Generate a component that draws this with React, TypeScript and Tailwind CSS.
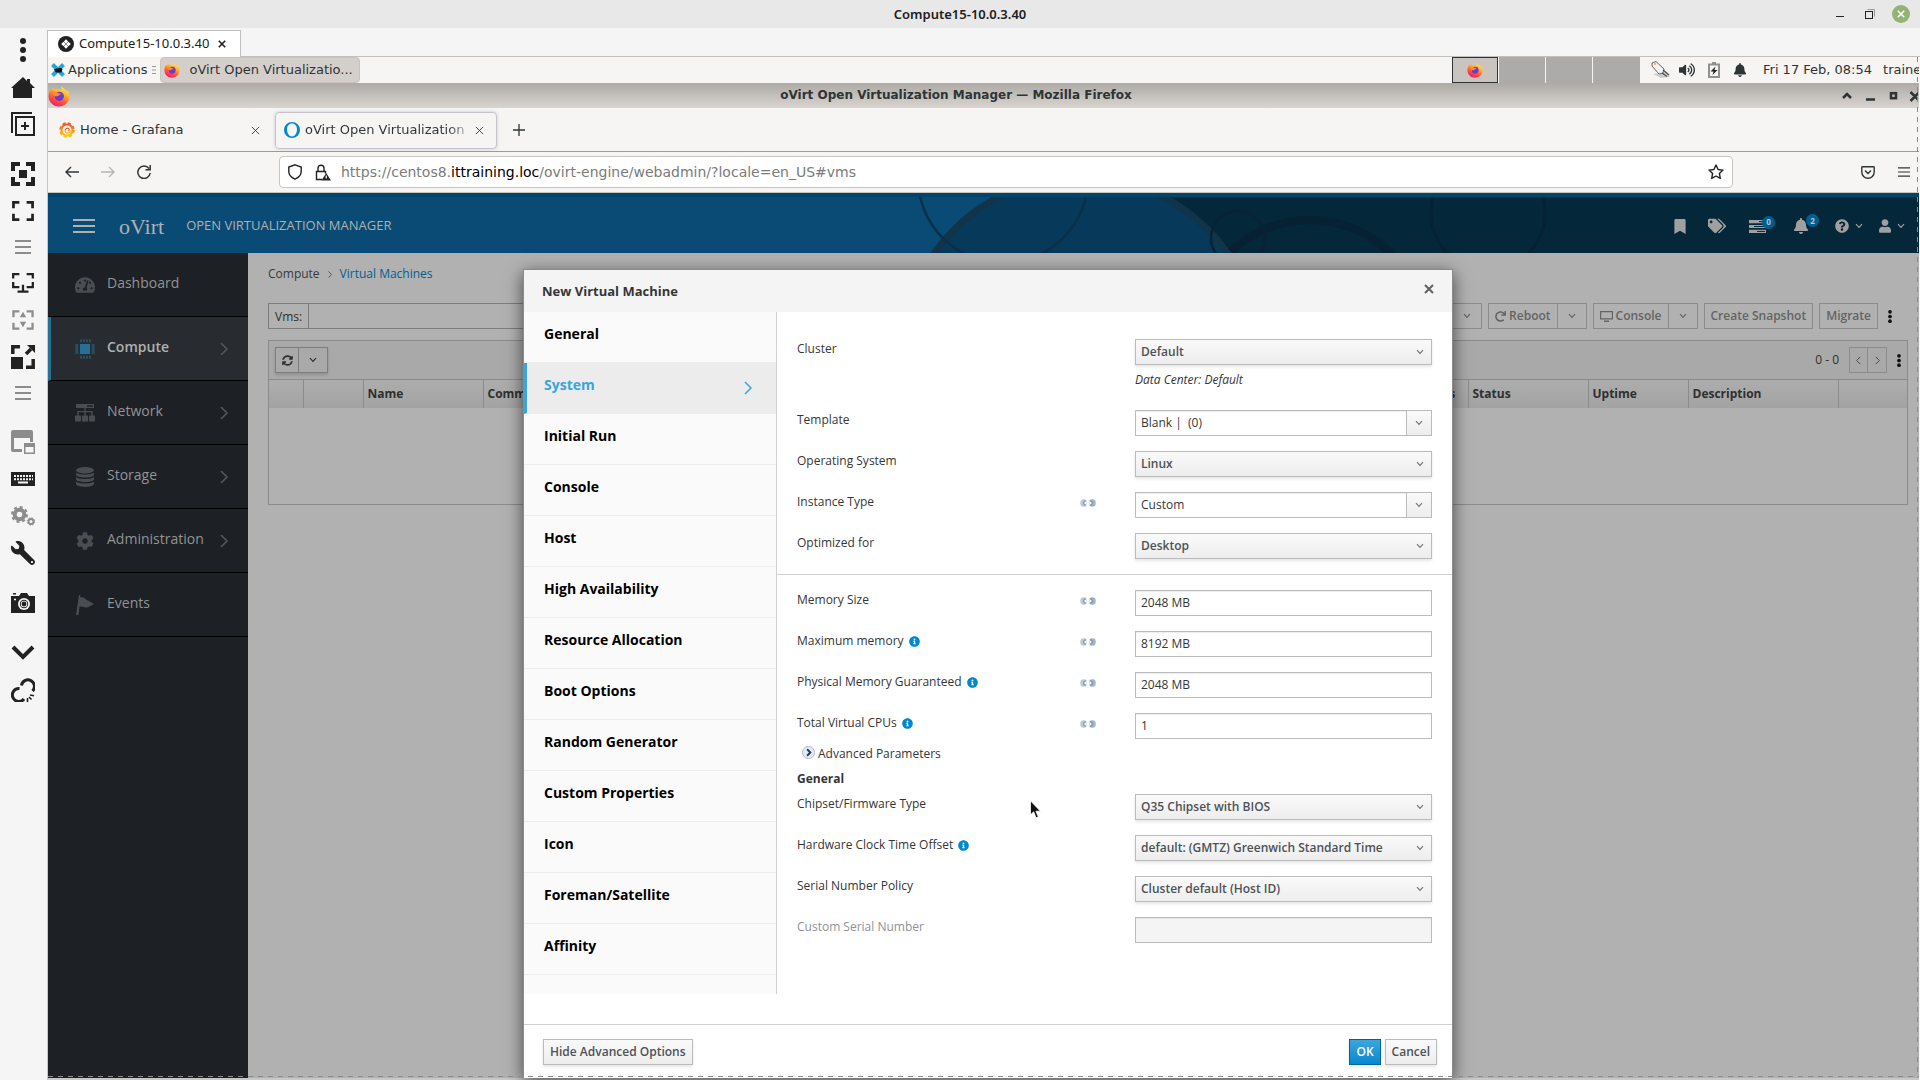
import React from 'react';
import {
  FaBell,
  FaBookmark,
  FaCog,
  FaDatabase,
  FaFlag,
  FaInfoCircle,
  FaQuestionCircle,
  FaRedo,
  FaSyncAlt,
  FaTachometerAlt,
  FaTags,
  FaUser,
  FaVolumeUp,
  FaWrench,
} from 'react-icons/fa';

type IconProps = { className?: string };

const Chevron = ({ className = '' }: IconProps) => (
  <svg viewBox="0 0 8 6" className={className} fill="none" stroke="currentColor" strokeWidth="1.2">
    <path d="M1 1.2 4 4.4 7 1.2" />
  </svg>
);

const ChevronRight = ({ className = '' }: IconProps) => (
  <svg viewBox="0 0 8 14" className={className} fill="none" stroke="currentColor" strokeWidth="1.5">
    <path d="M1 1 7 7 1 13" />
  </svg>
);

const Kebab = ({ className = '' }: IconProps) => (
  <svg viewBox="0 0 4 14" className={className} fill="currentColor">
    <circle cx="2" cy="2" r="2" />
    <circle cx="2" cy="7" r="2" />
    <circle cx="2" cy="12" r="2" />
  </svg>
);

const Cross = ({ className = '' }: IconProps) => (
  <svg viewBox="0 0 10 10" className={className} fill="none" stroke="currentColor">
    <path d="M1 1 9 9M9 1 1 9" />
  </svg>
);

const FirefoxLogo = ({ className = '' }: IconProps) => (
  <svg viewBox="0 0 22 22" className={className}>
    <defs>
      <linearGradient id="ffBody" x1="0.8" y1="0" x2="0.3" y2="1">
        <stop offset="0" stopColor="#fff14a" />
        <stop offset="0.35" stopColor="#ffb52e" />
        <stop offset="0.65" stopColor="#ff5b36" />
        <stop offset="1" stopColor="#f0137a" />
      </linearGradient>
    </defs>
    <path
      fill="url(#ffBody)"
      d="M13.5 1c-.6 1.8.3 2.9-.2 3.7C11.7 4 9.5 4 8 4.6 7 4.2 6.2 3.5 5.9 2.5 5 3.2 4.5 4.2 4.3 5.1 3.8 4.8 3.5 4.3 3.3 3.6 1.5 5.700.6 8.500.6 11.2c0 5.900 4.600 10.300 10.400 10.300S21.400 17 21.400 11.300c0-2.600-.8-4.900-2.300-6.500.1.900.1 1.500-.1 2.100C18 4.500 15 3.700 13.500 1Z"
    />
    <circle cx="11.3" cy="11.3" r="4.600" fill="#7139c9" />
    <path fill="#5b4be0" d="M11 7a4.500 4.500 0 0 1 4.500 5.500C14 10 12.500 9.500 10.500 9.500Z" />
    <path fill="#ff8a26" d="M4.500 8c2-1.500 4.500-1.200 6 .2 1 .1 2 .3 2.300.8-.4 1.100-2.200 1-2.700 1.900-1.500.9-4.600.8-5.600-2.900Z" />
  </svg>
);

const GrafanaLogo = () => (
  <svg viewBox="0 0 16 16" className="size-4" fill="none">
    <defs>
      <linearGradient id="grafana" x1="0" y1="0" x2="0" y2="1">
        <stop offset="0" stopColor="#f05a28" />
        <stop offset="1" stopColor="#fbca0a" />
      </linearGradient>
    </defs>
    <circle cx="8" cy="8" r="6.400" stroke="url(#grafana)" strokeWidth="2.800" strokeDasharray="3 2.026" />
    <circle cx="8" cy="8" r="5.600" stroke="url(#grafana)" strokeWidth="2" />
    <path d="M11.500 8.500c-.2 3-4.300 3.600-5.300 1-.8-2.500 1.800-4.200 3.600-2.600.9 1 .2 2.300-.9 2" stroke="url(#grafana)" strokeWidth="1.200" />
  </svg>
);

const LinkIcon = () => (
  <svg viewBox="0 0 16 8" className="w-4 h-2" fill="none">
    <rect x="0.300" y="0.300" width="6.700" height="7.400" rx="3" fill="#bccad8" />
    <rect x="9" y="0.300" width="6.700" height="7.400" rx="3" fill="#a3b5c8" />
    <path d="M7 3H5.500v2H7M9 3h1.500v2H9" stroke="#fff" strokeWidth="1.200" />
    <path d="M6 2.100H4.800a1.200 1.200 0 0 0-1.200 1.200v1.400a1.200 1.200 0 0 0 1.200 1.200H6M10 2.100h1.200a1.200 1.200 0 0 1 1.200 1.200v1.400a1.200 1.200 0 0 1-1.200 1.200H10" stroke="#73889f" strokeWidth="0.900" />
  </svg>
);

const GearPair = () => (
  <svg viewBox="0 0 24 20" className="w-6 h-5" fill="none" stroke="currentColor">
    <circle cx="8.500" cy="8.500" r="4.800" strokeWidth="4" />
    <circle cx="8.500" cy="8.500" r="7.500" strokeWidth="2" strokeDasharray="3 2.890" />
    <circle cx="20" cy="15.500" r="2.500" strokeWidth="1.800" />
    <circle cx="20" cy="15.500" r="3.700" strokeWidth="1" strokeDasharray="1.500 1.406" />
  </svg>
);

const corners = 'M1.500 8V1.500H8M16 1.500h6.500V8M22.500 14v6.500H16M8 20.500H1.500V14';

// icons of the viewer's own tool rail, all on a 24px grid
const railGroups: { label: string; dim?: boolean; short?: boolean; icon: React.ReactNode }[][] = [
  [
    {
      label: 'Menu',
      icon: (
        <svg viewBox="0 0 24 24" className="size-6" fill="currentColor">
          <circle cx="12" cy="3" r="3" />
          <circle cx="12" cy="12" r="3" />
          <circle cx="12" cy="21" r="3" />
        </svg>
      ),
    },
    {
      label: 'Home',
      icon: (
        <svg viewBox="0 0 24 24" className="size-6" fill="currentColor">
          <path d="M12 2 0 13h2v10h19V13h3l-5-5V4h-3v2Z" />
        </svg>
      ),
    },
    {
      label: 'New connection',
      icon: (
        <svg viewBox="0 0 24 24" className="size-6" fill="none" stroke="currentColor" strokeWidth="2">
          <rect x="5" y="5" width="18" height="18" />
          <path d="M1 21V1h20M14 10v8M10 14h8" />
        </svg>
      ),
    },
  ],
  [
    {
      label: 'Fit window',
      icon: (
        <svg viewBox="0 0 24 24" className="size-6" fill="none" stroke="currentColor" strokeWidth="4">
          <path d="M2 9V2h7M15 2h7v7M22 15v7h-7M9 22H2v-7" />
          <rect x="8" y="8" width="8" height="8" fill="currentColor" stroke="none" />
        </svg>
      ),
    },
    {
      label: 'Full screen',
      icon: (
        <svg viewBox="0 0 24 22" className="w-6 h-5" fill="none" stroke="currentColor" strokeWidth="3">
          <path d={corners} />
        </svg>
      ),
    },
    { label: 'More view options', dim: true, short: true, icon: <RailLines /> },
    {
      label: 'Multi monitor',
      icon: (
        <svg viewBox="0 0 24 22" className="w-6 h-5" fill="none" stroke="currentColor" strokeWidth="2.500">
          <path d="M1.200 6V1.200H8M16 1.200h6.800V6M22.800 10v5.500H16M8 15.500H1.200V10M12 13v7M6 20.500h12" />
        </svg>
      ),
    },
    {
      label: 'Dynamic resolution',
      dim: true,
      icon: (
        <svg viewBox="0 0 24 22" className="w-6 h-5" fill="none" stroke="currentColor" strokeWidth="2.500">
          <path d={corners} />
          <path d="m12 2 3.500 6h-7ZM12 19l3.500-6h-7Z" fill="currentColor" stroke="none" />
        </svg>
      ),
    },
    {
      label: 'Scale',
      icon: (
        <svg viewBox="0 0 24 24" className="size-6" fill="none" stroke="currentColor" strokeWidth="3.500">
          <path d="M1.800 9V1.800H9M22.200 14v8.200H15M15 9l5-5" />
          <path d="M16 0h8v8ZM0 12h12v12H0Z" fill="currentColor" stroke="none" />
        </svg>
      ),
    },
    { label: 'More scaling options', dim: true, short: true, icon: <RailLines /> },
  ],
  [
    {
      label: 'Picture in picture',
      dim: true,
      icon: (
        <svg viewBox="0 0 24 24" className="size-6" fill="currentColor">
          <path d="M2 0h18a2 2 0 0 1 2 2v10h-3V8H3v11h8v3H2a2 2 0 0 1-2-2V2a2 2 0 0 1 2-2Z" />
          <path d="M13 13h11v11H13Zm1.500 4v5.500h8V17Z" fillRule="evenodd" />
        </svg>
      ),
    },
    {
      label: 'Grab keyboard',
      icon: (
        <svg viewBox="0 0 24 14" className="w-6 h-3.5">
          <rect width="24" height="14" fill="currentColor" />
          <path d="M3 4h19M3 7.200h19" stroke="#f5f5f5" strokeWidth="2" strokeDasharray="2 1" />
          <path d="M7 10.500h10" stroke="#f5f5f5" strokeWidth="2" />
        </svg>
      ),
    },
    { label: 'Preferences', dim: true, icon: <GearPair /> },
    { label: 'Tools', icon: <FaWrench className="size-6 -scale-x-100" /> },
  ],
  [
    {
      label: 'Screenshot',
      icon: (
        <svg viewBox="0 0 24 20" className="w-6 h-5">
          <path d="M0 3h8l2-3h6l2 3h6v17H0Z" fill="currentColor" />
          <path d="M2 .8h3" stroke="currentColor" strokeWidth="1.500" />
          <circle cx="13" cy="11" r="6" fill="#f5f5f5" />
          <circle cx="13" cy="11" r="4.200" fill="currentColor" />
          <circle cx="13" cy="11" r="3.200" fill="#f5f5f5" />
          <circle cx="13" cy="11" r="2.400" fill="currentColor" />
          <path d="M3 6.500h2" stroke="#f5f5f5" strokeWidth="1.500" />
        </svg>
      ),
    },
  ],
  [
    {
      label: 'Minimize',
      icon: (
        <svg viewBox="0 0 24 24" className="size-6" fill="none" stroke="currentColor" strokeWidth="4">
          <path d="m2 6 10 10L22 6" />
        </svg>
      ),
    },
    {
      label: 'Disconnect',
      icon: (
        <svg viewBox="0 0 24 24" className="size-6" fill="none" stroke="currentColor" strokeWidth="3">
          <path d="M10.500 7.500a6.500 6.500 0 1 1 11 5.500M8.500 10.500A6.500 6.500 0 1 0 13 21" />
          <path d="M19 17l4 .8M18 19l2.500 2.500M16.500 20v4" strokeWidth="1.600" />
        </svg>
      ),
    },
  ],
];

function RailLines() {
  return (
    <svg viewBox="0 0 16 14" className="w-4 h-3.5" stroke="currentColor" strokeWidth="2">
      <path d="M0 1h16M0 7h16M0 13h16" />
    </svg>
  );
}

const NetworkIcon = () => (
  <svg viewBox="0 0 20 18" className="w-5 h-[18px]" fill="currentColor">
    <path d="M1 0h18v4H1Zm11 1.200v1.600h6V1.200ZM9.300 4h1.400v3h7v5h-1.400V8.300H10.700V12H9.300V8.300H3.700V12H2.300V7h7Z" fillRule="evenodd" />
    <rect y="11.500" width="6" height="6" rx="0.800" />
    <rect x="7" y="11.500" width="6" height="6" rx="0.800" />
    <rect x="14" y="11.500" width="6" height="6" rx="0.800" />
  </svg>
);

const StorageIcon = () => (
  <svg viewBox="0 0 18 20" className="h-5 w-[18px]" fill="currentColor">
    <ellipse cx="9" cy="3.200" rx="9" ry="3.200" />
    <path d="M0 5.500c2 2.600 16 2.600 18 0v2.200c-1 3.700-17 3.700-18 0ZM0 10c2 2.600 16 2.600 18 0v2.200c-1 3.700-17 3.700-18 0ZM0 14.500c2 2.600 16 2.600 18 0v2.300c-1 4.200-17 4.200-18 0Z" />
  </svg>
);

const CpuIcon = () => (
  <svg viewBox="0 0 20 20" className="size-5" fill="none" stroke="currentColor">
    <rect x="5" y="5" width="10" height="10" fill="currentColor" stroke="none" />
    <path d="M5.500 1.800h10M5.500 18.200h10" strokeWidth="3" strokeDasharray="1 2" />
    <path d="M1.800 5.500v10M18.200 5.500v10" strokeWidth="3" strokeDasharray="1 1" />
  </svg>
);

const PennantIcon = () => (
  <svg viewBox="0 0 18 20" className="h-5 w-[18px]" fill="currentColor">
    <path d="M3 0 4.500.5 4 2c4-.5 6 3 8 3.500L18 9l-5.500 3c-3 1.500-5-1-9-.5L2.500 20H0Z" />
  </svg>
);

const mainMenu = [
  { name: 'Dashboard', icon: <FaTachometerAlt className="size-5" /> },
  { name: 'Compute', icon: <CpuIcon />, arrow: true, active: true },
  { name: 'Network', icon: <NetworkIcon />, arrow: true },
  { name: 'Storage', icon: <StorageIcon />, arrow: true },
  { name: 'Administration', icon: <FaCog className="size-[18px]" />, arrow: true },
  { name: 'Events', icon: <PennantIcon /> },
];

const dialogTabs = [
  'General',
  'System',
  'Initial Run',
  'Console',
  'Host',
  'High Availability',
  'Resource Allocation',
  'Boot Options',
  'Random Generator',
  'Custom Properties',
  'Icon',
  'Foreman/Satellite',
  'Affinity',
];

const Row = ({
  id,
  label,
  info,
  link,
  disabled,
  children,
}: {
  id: string;
  label: string;
  info?: boolean;
  link?: boolean;
  disabled?: boolean;
  children: React.ReactNode;
}) => (
  <div className="flex items-start">
    <div className="flex flex-1 items-center gap-[5px] leading-5">
      <label htmlFor={id} className={disabled ? 'text-[#8f9296]' : ''}>
        {label}
      </label>
      {info && <FaInfoCircle className="size-[11px] text-[#0088ce]" />}
    </div>
    <div className="flex h-[22px] w-[55px] items-center">{link && <LinkIcon />}</div>
    <div className="w-[297px]">{children}</div>
  </div>
);

const Select = ({ id, value }: { id: string; value: string }) => (
  <div className="relative">
    <select
      id={id}
      defaultValue={value}
      className="block h-[26px] w-full appearance-none border border-[#bbb] bg-linear-to-b from-[#fafafa] to-[#ededed] px-[5px] font-semibold text-[#4d5258] shadow-[0_2px_3px_rgba(3,3,3,0.1)]"
    >
      <option>{value}</option>
    </select>
    <Chevron className="pointer-events-none absolute top-[10px] right-2 h-1.5 w-2 text-[#72767b]" />
  </div>
);

const Combo = ({ id, value }: { id: string; value: string }) => (
  <div className="flex h-[26px] border border-[#bbb]">
    <input id={id} defaultValue={value} className="min-w-0 flex-1 px-[5px] shadow-[inset_0_1px_1px_rgba(3,3,3,0.075)]" />
    <button
      aria-label="Show options"
      className="flex w-[25px] items-center justify-center border-l border-[#bbb] bg-linear-to-b from-[#fafafa] to-[#ededed]"
    >
      <Chevron className="h-1.5 w-2 text-[#72767b]" />
    </button>
  </div>
);

const TextBox = ({ id, value, disabled }: { id: string; value: string; disabled?: boolean }) => (
  <input
    id={id}
    defaultValue={value}
    disabled={disabled}
    className="block h-[26px] w-full border border-[#bbb] bg-white px-[5px] pb-px shadow-[inset_0_1px_1px_rgba(3,3,3,0.075)] disabled:bg-[#f4f4f4]"
  />
);

const Dialog = () => (
  <section
    role="dialog"
    aria-labelledby="dialog-title"
    className="w-[930px] border border-[#8b8b8b] border-b-0 bg-white text-xs text-[#363636] shadow-[0_4px_16px_rgba(0,0,0,0.6)]"
  >
    <header className="flex h-[42px] items-center justify-between bg-[#f4f4f4] px-[18px]">
      <h2 id="dialog-title" className="pt-0.5 text-[13px] font-bold">
        New Virtual Machine
      </h2>
      <button aria-label="Close" className="pb-1 text-[#606060]">
        <Cross className="size-[10px] stroke-2" />
      </button>
    </header>
    <div className="mb-[30px] flex">
      <nav className="w-[253px] border-r border-[#d1d1d1] bg-[#fafafa] pb-[19px]">
        {dialogTabs.map((tab) => {
          const active = tab === 'System';
          return (
            <a
              key={tab}
              href="#vms"
              className={`flex h-[51px] items-center justify-between border-b border-[#ededed] pr-6 text-sm font-bold ${
                active ? 'border-l-[3px] border-l-[#39a5dc] bg-[#ececec] pl-[17px] text-[#39a5dc]' : 'pl-5 text-black'
              }`}
            >
              <span className="pb-1.5">{tab}</span>
              {active && <ChevronRight className="h-[14px] w-2" />}
            </a>
          );
        })}
      </nav>
      <form className="flex-1 pt-[27px]">
        <div className="flex flex-col gap-[15px] border-b border-[#d1d1d1] px-5 pb-[15px]">
          <Row id="cluster" label="Cluster">
            <Select id="cluster" value="Default" />
            <p className="pt-[5px] pb-[5px] leading-5 italic">Data Center: Default</p>
          </Row>
          <Row id="template" label="Template">
            <Combo id="template" value="Blank |  (0)" />
          </Row>
          <Row id="os" label="Operating System">
            <Select id="os" value="Linux" />
          </Row>
          <Row id="instance" label="Instance Type" link>
            <Combo id="instance" value="Custom" />
          </Row>
          <Row id="optimized" label="Optimized for">
            <Select id="optimized" value="Desktop" />
          </Row>
        </div>
        <div className="flex flex-col gap-[15px] px-5 pt-[15px]">
          <Row id="memory" label="Memory Size" link>
            <TextBox id="memory" value="2048 MB" />
          </Row>
          <Row id="max-memory" label="Maximum memory" info link>
            <TextBox id="max-memory" value="8192 MB" />
          </Row>
          <Row id="guaranteed" label="Physical Memory Guaranteed" info link>
            <TextBox id="guaranteed" value="2048 MB" />
          </Row>
          <Row id="cpus" label="Total Virtual CPUs" info link>
            <TextBox id="cpus" value="1" />
          </Row>
        </div>
        <div className="px-5 py-[5px]">
          <button type="button" className="flex items-center gap-[3px] pl-[5px] leading-5">
            <svg viewBox="0 0 14 14" className="mb-1 size-[13px]">
              <circle cx="7" cy="7" r="6.500" fill="#e6ebf3" stroke="#a9b4c6" />
              <path d="m5.500 3.500 3.500 3.500-3.500 3.500" fill="none" stroke="#1f3864" strokeWidth="2" />
            </svg>
            Advanced Parameters
          </button>
          <h3 className="mt-[5px] leading-5 font-bold">General</h3>
        </div>
        <div className="flex flex-col gap-[15px] px-5">
          <Row id="chipset" label="Chipset/Firmware Type">
            <Select id="chipset" value="Q35 Chipset with BIOS" />
          </Row>
          <Row id="clock" label="Hardware Clock Time Offset" info>
            <Select id="clock" value="default: (GMTZ) Greenwich Standard Time" />
          </Row>
          <Row id="serial-policy" label="Serial Number Policy">
            <Select id="serial-policy" value="Cluster default (Host ID)" />
          </Row>
          <Row id="serial" label="Custom Serial Number" disabled>
            <TextBox id="serial" value="" disabled />
          </Row>
        </div>
      </form>
    </div>
    <footer className="flex justify-between border-t border-[#d1d1d1] pt-[14px] pr-[15px] pb-[13px] pl-[19px]">
      <button className="h-[26px] border border-[#bbb] bg-linear-to-b from-[#fafafa] to-[#ededed] px-1.5 font-semibold text-[#4d5258] shadow-[0_2px_3px_rgba(3,3,3,0.1)]">
        Hide Advanced Options
      </button>
      <div className="flex gap-1">
        <button className="h-[26px] border border-[#00659c] bg-linear-to-b from-[#39a5dc] to-[#0088ce] px-1.5 font-semibold text-white shadow-[0_2px_3px_rgba(3,3,3,0.1)]">
          OK
        </button>
        <button className="h-[26px] border border-[#bbb] bg-linear-to-b from-[#fafafa] to-[#ededed] px-1.5 font-semibold text-[#4d5258] shadow-[0_2px_3px_rgba(3,3,3,0.1)]">
          Cancel
        </button>
      </div>
    </footer>
  </section>
);

const SplitButton = ({ label, icon }: { label: string; icon?: React.ReactNode }) => (
  <div className="flex h-[26px] border border-[#8b8b8b] text-[#646464]">
    <button className="flex items-center gap-[3px] px-1.5 font-semibold">
      {icon}
      {label}
    </button>
    <button aria-label={`${label} options`} className="flex w-[29px] items-center justify-center border-l border-[#8b8b8b]">
      <Chevron className="h-1.5 w-2" />
    </button>
  </div>
);

const MonitorIcon = () => (
  <svg viewBox="0 0 13 11" className="h-[11px] w-[13px]" fill="currentColor">
    <path d="M0 0h13v8.500H0Zm1.200 1.200v6h10.600v-6ZM4 9.500h5V11H4Z" fillRule="evenodd" />
  </svg>
);

const columns = [
  { name: '', width: 'w-[34px]' },
  { name: '', width: 'w-[60px]' },
  { name: 'Name', width: 'w-[120px]' },
  { name: 'Comment', width: 'w-[75px]' },
  { name: '', width: '' },
  { name: 'Graphics', width: 'w-[70px]' },
  { name: 'Status', width: 'w-[120px]' },
  { name: 'Uptime', width: 'w-[100px]' },
  { name: 'Description', width: 'w-[150px]' },
  { name: '', width: 'w-[69px]' },
];

const Workspace = () => (
  <main className="min-w-0 flex-1 bg-[#b1b1b1] pt-[11px] pr-[11px] pl-5 text-xs text-[#2f2f2f]">
    <nav className="flex items-center gap-2 leading-5 text-[#363a3e]">
      <a href="#compute">Compute</a>
      <ChevronRight className="h-[7px] w-1" />
      <a href="#vms" className="text-[#005f91]">
        Virtual Machines
      </a>
    </nav>
    <div className="mt-[19px] flex items-center justify-between">
      <div className="flex h-[26px] border border-[#7d7d7d]">
        <label htmlFor="search" className="border-r border-[#7d7d7d] px-1.5 leading-[25px]">
          Vms:
        </label>
        <input id="search" className="w-[520px] px-1.5" />
      </div>
      <div className="flex items-center gap-1.5 pr-4">
        <SplitButton label="Shutdown" />
        <SplitButton label="Reboot" icon={<FaRedo className="size-[11px]" />} />
        <SplitButton label="Console" icon={<MonitorIcon />} />
        <button className="h-[26px] border border-[#8b8b8b] px-1.5 font-semibold text-[#646464]">Create Snapshot</button>
        <button className="h-[26px] border border-[#8b8b8b] px-1.5 font-semibold text-[#646464]">Migrate</button>
        <button aria-label="More actions" className="pl-1 text-[#111]">
          <Kebab className="h-[13px] w-1" />
        </button>
      </div>
    </div>
    <div className="mt-[11px] h-[165px] border border-[#8b8b8b]">
      <div className="flex h-[39px] items-center justify-between border-b border-[#8b8b8b] bg-[#a9a9a9] px-1.5">
        <div className="flex h-[26px] border border-[#7d7d7d] shadow-[0_2px_3px_rgba(3,3,3,0.15)]">
          <button aria-label="Refresh" className="flex w-[23px] items-center justify-center border-r border-[#7d7d7d]">
            <FaSyncAlt className="size-[11px]" />
          </button>
          <button aria-label="Refresh rate" className="flex w-[28px] items-center justify-center">
            <Chevron className="h-1.5 w-2" />
          </button>
        </div>
        <div className="flex items-center">
          <span className="mr-[10px]">0 - 0</span>
          <div className="flex h-[26px] border border-[#8b8b8b] text-[#444]">
            <button aria-label="Previous page" className="flex w-[18px] items-center justify-center border-r border-[#8b8b8b]">
              <ChevronRight className="h-[9px] w-[5px] rotate-180" />
            </button>
            <button aria-label="Next page" className="flex w-[18px] items-center justify-center">
              <ChevronRight className="h-[9px] w-[5px]" />
            </button>
          </div>
          <button aria-label="Table options" className="ml-[10px] text-[#111]">
            <Kebab className="h-[13px] w-1" />
          </button>
        </div>
      </div>
      <table className="w-full table-fixed border-collapse">
        <thead>
          <tr className="h-7 bg-linear-to-b from-[#adadad] to-[#a3a3a3]">
            {columns.map((column, i) => (
              <th
                key={i}
                className={`overflow-hidden border-r border-[#8b8b8b] pl-1 text-left font-bold last:border-r-0 ${column.width}`}
              >
                {column.name}
              </th>
            ))}
          </tr>
        </thead>
      </table>
    </div>
  </main>
);

const Masthead = () => (
  <header className="relative flex h-[60px] items-center justify-between overflow-hidden border-t-4 border-[#00456b] bg-[#094b74] pt-0.5 text-[#b0b0b0]">
    <svg viewBox="0 0 1020 56" className="absolute top-0 right-0 h-14 w-[1020px]" fill="none">
      <rect x="182" width="838" height="56" fill="#042739" />
      <circle cx="411" cy="138" r="115" stroke="#062133" strokeWidth="8" />
      <circle cx="589" cy="16" r="57" stroke="#052234" strokeWidth="3" />
      <circle cx="182" cy="159" r="179" fill="#073a5a" stroke="#11344b" strokeWidth="7" />
      <circle cx="104" cy="-19" r="85" stroke="#0a304a" strokeWidth="2.500" />
      <circle cx="339" cy="41" r="27" stroke="#0a2235" strokeWidth="2.500" />
    </svg>
    <div className="relative flex items-center pl-[25px]">
      <button aria-label="Toggle navigation">
        <svg viewBox="0 0 22 14" className="h-[14px] w-[22px]" stroke="currentColor" strokeWidth="2">
          <path d="M0 1h22M0 7h22M0 13h22" />
        </svg>
      </button>
      <span className="ml-6 font-['Liberation_Serif',serif] text-[22px]">oVirt</span>
      <span className="ml-[22px] text-[13px]">OPEN VIRTUALIZATION MANAGER</span>
    </div>
    <div className="relative flex items-center pr-[14px] text-[#a0a0a0]">
      <button aria-label="Bookmarks">
        <FaBookmark className="h-[15px] w-3" />
      </button>
      <button aria-label="Tags" className="ml-[22px]">
        <FaTags className="size-[18px]" />
      </button>
      <button aria-label="Tasks" className="relative ml-[23px]">
        <svg viewBox="0 0 17 13" className="h-[13px] w-[17px]" fill="none" stroke="currentColor" strokeWidth="3.200">
          <path d="M0 1.600h17M0 6.500h17M0 11.400h17" />
          <path d="M10 1.600h6M5 6.500h11M8 11.400h8" stroke="#042739" strokeWidth="1" />
        </svg>
        <Badge count={0} />
      </button>
      <button aria-label="Notifications" className="relative ml-[27px]">
        <FaBell className="size-4" />
        <Badge count={2} />
      </button>
      <button aria-label="Help" className="ml-[26px] flex items-center gap-1.5">
        <FaQuestionCircle className="size-[14px]" />
        <Chevron className="h-1.5 w-2" />
      </button>
      <button aria-label="User" className="ml-4 flex items-center gap-1.5">
        <FaUser className="h-[14px] w-3" />
        <Chevron className="h-1.5 w-2" />
      </button>
    </div>
  </header>
);

function Badge({ count }: { count: number }) {
  return (
    <span className="absolute -top-1 left-[13px] flex size-[13px] items-center justify-center rounded-full bg-[#005f91] text-[8px] font-bold text-[#c0c0c0]">
      {count}
    </span>
  );
}

const Browser = () => (
  <div className="flex flex-1 flex-col font-['DejaVu_Sans',sans-serif] text-[#2e3436]">
    <div className="flex h-[25px] items-center bg-linear-to-b from-[#adaaa6] to-[#d9d4d0] pr-px">
      <FirefoxLogo className="size-[22px]" />
      <h1 className="flex-1 pb-0.5 text-center text-[12px] font-bold">oVirt Open Virtualization Manager — Mozilla Firefox</h1>
      <svg viewBox="0 0 76 12" className="h-3 w-[76px]" fill="none" stroke="#2e3436" strokeWidth="2.500">
        <path d="m1 8 4-4 4 4M24 9.500h9M68.500 2l9 9M77.500 2l-9 9" />
        <rect x="49" y="3.200" width="5" height="5" />
      </svg>
    </div>
    <div className="flex h-[44px] items-center border-b border-[#9b9b97] bg-[#f6f5f4] pt-px text-[13px]">
      <div className="flex w-[227px] items-center gap-[5px] px-[11px]">
        <GrafanaLogo />
        <span className="flex-1">Home - Grafana</span>
        <button aria-label="Close tab" className="mr-1">
          <Cross className="size-[9px]" />
        </button>
      </div>
      <div className="flex h-[37px] w-[222px] items-center gap-[5px] rounded-sm border border-[#c5c4cb] px-2 shadow-[0_0_3px_rgba(120,120,150,0.4)]">
        <svg viewBox="0 0 16 16" className="size-4 shrink-0" fill="#0088ce">
          <path d="M8 0a8 8 0 1 0 0 16A8 8 0 0 0 8 0Zm0 1.500c3 0 5 2.500 5 6s-2 7-5 7-5-3.500-5-7 2-6 5-6Z" fillRule="evenodd" />
        </svg>
        <span className="bg-linear-to-r from-[#2e3436] from-90% to-[#2e3436]/40 bg-clip-text whitespace-nowrap text-transparent">
          oVirt Open Virtualization
        </span>
        <button aria-label="Close tab" className="mr-1 ml-auto">
          <Cross className="size-[9px]" />
        </button>
      </div>
      <button aria-label="New tab" className="ml-4">
        <svg viewBox="0 0 12 12" className="size-3" stroke="currentColor" strokeWidth="1.300">
          <path d="M6 0v12M0 6h12" />
        </svg>
      </button>
    </div>
    <div className="flex h-[41px] items-center border-b border-[#c9c5c1] bg-[#f6f5f4] pr-[9px] pl-[17px]">
      <div className="flex w-[214px] items-center gap-[22px]">
        <button aria-label="Back">
          <svg viewBox="0 0 14 12" className="h-3 w-[14px]" fill="none" stroke="currentColor" strokeWidth="1.400">
            <path d="M14 6H1M6 1 1 6l5 5" />
          </svg>
        </button>
        <button aria-label="Forward" disabled className="text-[#b4b6b6]">
          <svg viewBox="0 0 14 12" className="h-3 w-[14px]" fill="none" stroke="currentColor" strokeWidth="1.400">
            <path d="M0 6h13M8 1l5 5-5 5" />
          </svg>
        </button>
        <button aria-label="Reload">
          <svg viewBox="0 0 14 14" className="size-[14px]" fill="none" stroke="currentColor" strokeWidth="1.500">
            <path d="M12 3.500A6.200 6.200 0 1 0 13.200 8M13.200 0v4.800H8.500" />
          </svg>
        </button>
      </div>
      <div className="flex h-8 flex-1 items-center rounded-sm border border-[#c9c5c1] bg-white px-2">
        <svg viewBox="0 0 14 16" className="h-4 w-[14px]" fill="none" stroke="#222" strokeWidth="1.400">
          <path d="M7 .8 13.200 3v4.500c0 3.500-2.500 6-6.200 7.700C3.300 13.500.8 11 .8 7.500V3Z" />
        </svg>
        <svg viewBox="0 0 16 17" className="ml-[13px] h-[17px] w-4" fill="none" stroke="#222" strokeWidth="1.400">
          <path d="M7 15.500H1.500v-8h9v2M3 7.500V4.200a3 3 0 0 1 6 0v3.300" />
          <path d="M11.200 9 16 16.500H6.500Z" fill="#222" stroke="none" />
          <path d="M11.200 11.500v3" stroke="#fff" strokeWidth="1.200" />
        </svg>
        <p className="ml-[10px] flex-1 text-[14px] text-[#7b7b7b]">
          https://centos8.<span className="text-black">ittraining.loc</span>/ovirt-engine/webadmin/?locale=en_US#vms
        </p>
        <button aria-label="Bookmark this page">
          <svg viewBox="0 0 16 16" className="size-4" fill="none" stroke="#222" strokeWidth="1.400" strokeLinejoin="round">
            <path d="m8 1 2.100 4.500 4.900.6-3.600 3.400.9 4.900L8 12l-4.300 2.400.9-4.900L1 6.100l4.900-.6Z" />
          </svg>
        </button>
      </div>
      <button aria-label="Save to Pocket" className="ml-32">
        <svg viewBox="0 0 14 13" className="h-[13px] w-[14px]" fill="none" stroke="currentColor" strokeWidth="1.400">
          <path d="M1.500.8h11c.4 0 .7.300.7.700v4.500a6.200 6.200 0 0 1-12.400 0V1.500c0-.4.3-.7.7-.7ZM4 4.500l3 3 3-3" />
        </svg>
      </button>
      <button aria-label="Open application menu" className="ml-[23px]">
        <svg viewBox="0 0 12 10" className="h-[10px] w-3" stroke="currentColor" strokeWidth="1.200">
          <path d="M0 .8h12M0 5h12M0 9.200h12" />
        </svg>
      </button>
    </div>
    <div className="relative flex flex-1 flex-col font-['Open_Sans',sans-serif]">
      <Masthead />
      <div className="flex flex-1">
        <nav className="w-[200px] bg-[#1d2025] text-sm text-[#929394]">
          {mainMenu.map((item) => (
            <a
              key={item.name}
              href="#menu"
              className={`flex h-16 items-center border-b border-black pr-5 ${
                item.active ? 'border-l-[3px] border-l-[#277095] bg-[#282b30] pl-6 font-semibold text-[#b0b0b0]' : 'pl-[27px]'
              }`}
            >
              <span className={`mr-3 flex w-5 justify-center ${item.active ? 'text-[#277095]' : 'text-[#4a4e52]'}`}>{item.icon}</span>
              <span className="flex-1 pb-1">{item.name}</span>
              {item.arrow && <ChevronRight className="h-[14px] w-2 text-[#55585c]" />}
            </a>
          ))}
        </nav>
        <Workspace />
      </div>
      <div className="absolute inset-x-0 top-[76px] flex justify-center pl-[9px]">
        <Dialog />
      </div>
      <svg viewBox="0 0 12 19" className="absolute top-[607px] left-[982px] h-[19px] w-3">
        <path d="M.5.800v14l3.200-3 2.300 6 2.300-1-2.400-5.600h4.500Z" fill="#111" stroke="#fff" strokeWidth=".8" />
      </svg>
    </div>
  </div>
);

const Panel = () => (
  <div className="flex h-[26px] items-center overflow-hidden bg-[#f6f5f4] font-['DejaVu_Sans',sans-serif] text-[13px] whitespace-nowrap text-[#2e3436]">
    <button className="flex items-center gap-[3px] pb-px pl-[3px]">
      <svg viewBox="0 0 14 14" className="size-[14px]" fill="none">
        <path d="m1.500 1.500 11 11M12.500 1.500l-11 11" stroke="#1fa8dc" strokeWidth="4" />
        <path d="M3 6.500 5 5.500l5-.5 1.500 1-1 3.500H5Z" fill="#111" />
      </svg>
      Applications
    </button>
    <svg viewBox="0 0 4 10" className="mr-1 ml-[5px] h-[10px] w-1" stroke="#999">
      <path d="M0 1.500h4M0 5h4M0 8.500h4" />
    </svg>
    <button className="flex h-[26px] w-[200px] items-center gap-[9px] rounded-sm border border-[#c9c2bd] bg-[#d5cfcb] px-[3px] pb-px">
      <FirefoxLogo className="size-4" />
      oVirt Open Virtualizatio...
    </button>
    <div className="ml-auto flex h-[26px] shrink-0 gap-px">
      <div className="flex w-[46px] items-center justify-center border border-[#2e3436] bg-[#c9c4bf]">
        <FirefoxLogo className="size-4" />
      </div>
      <div className="w-[46px] bg-[#adabaa]" />
      <div className="w-[46px] bg-[#adabaa]" />
      <div className="w-[47px] bg-[#adabaa]" />
    </div>
    <div className="flex w-[279px] shrink-0 items-center pb-px pl-[11px]">
      <svg viewBox="0 0 20 18" className="h-[18px] w-5 shrink-0">
        <path d="m2 13 8 4 9-1-3-5Z" fill="#ccc" />
        <path d="m1 2 4-1.500L13 8l-1 4-4 1L1 5Z" fill="#f4f4f4" stroke="#666" />
        <path d="m12 9 6 5M11 12l5 3.500" stroke="#555" strokeWidth="1.500" />
        <circle cx="4" cy="3" r="1.200" fill="#f0c040" />
      </svg>
      <FaVolumeUp className="ml-2 size-4 shrink-0" />
      <svg viewBox="0 0 12 16" className="ml-[13px] h-4 w-3 shrink-0" fill="none">
        <path d="M1 2.500h10v12.500H1Z" stroke="#8f9191" strokeWidth="2" />
        <path d="M4 1h4" stroke="#8f9191" strokeWidth="2" />
        <path d="M7.500 4.500 2.500 9.500h3l-1 3.500 5-5h-3Z" fill="#222" />
      </svg>
      <FaBell className="ml-[13px] size-[14px] shrink-0" />
      <span className="ml-4">Fri 17 Feb, 08:54</span>
      <span className="ml-[11px]">traine</span>
    </div>
  </div>
);

const App = () => (
  <div className="flex min-h-screen flex-col bg-[#f5f5f5] font-['Open_Sans',sans-serif] text-[#202020]">
    <header className="relative flex h-7 items-center justify-end gap-[21px] bg-[#e8e8e8] pr-[10px]">
      <span className="absolute inset-x-0 pt-px text-center font-['Noto_Sans',sans-serif] text-[13px] font-semibold">
        Compute15-10.0.3.40
      </span>
      <svg viewBox="0 0 8 10" className="relative h-[10px] w-2" stroke="#222">
        <path d="M0 7.500h8" />
      </svg>
      <svg viewBox="0 0 10 10" className="relative size-[10px]" fill="none" stroke="#222">
        <rect x=".5" y="2.500" width="7" height="7" />
        <path d="M2.500.5h7v7" stroke="#999" />
      </svg>
      <button aria-label="Close window" className="relative -ml-1 flex size-[18px] items-center justify-center rounded-full bg-[#92b372] text-white">
        <Cross className="size-2 stroke-2" />
      </button>
    </header>
    <div className="flex flex-1">
      <aside className="flex w-[47px] shrink-0 flex-col gap-[13px] pt-[3px] pr-px">
        {railGroups.map((group, i) => (
          <div key={i} className="flex flex-col items-center">
            {group.map((tool) => (
              <button
                key={tool.label}
                aria-label={tool.label}
                className={`flex items-center ${tool.short ? 'h-[35px]' : 'h-[37px]'} ${tool.dim ? 'text-[#8c8c8c]' : 'text-[#222]'}`}
              >
                {tool.icon}
              </button>
            ))}
          </div>
        ))}
      </aside>
      <div className="flex min-w-0 flex-1 flex-col">
        <div className="flex h-[29px] items-end border-b border-[#c0c0c0] pt-0.5">
          <div className="-mb-px flex h-[27px] items-center border border-b-0 border-[#c0c0c0] bg-white pr-[14px] pl-[10px] font-['Noto_Sans',sans-serif] text-[13px]">
            <svg viewBox="0 0 16 16" className="mr-[5px] size-4">
              <circle cx="8" cy="8" r="8" fill="#222" />
              <path d="M8 3.200 10.200 5.500 8 7.700 5.800 5.500ZM8 8.300l2.200 2.200L8 12.800l-2.200-2.300ZM3.200 8l2.300-2.200L7.700 8l-2.200 2.200ZM8.300 8l2.200-2.200L12.800 8l-2.300 2.200Z" fill="#fff" />
            </svg>
            Compute15-10.0.3.40
            <button aria-label="Close connection" className="ml-[9px]">
              <Cross className="size-2 stroke-2" />
            </button>
          </div>
        </div>
        <div className="relative mr-px flex flex-1 flex-col border-b-2 border-l border-[#c8c8c8]">
          <Panel />
          <Browser />
          <div className="pointer-events-none absolute inset-y-0 right-px w-px bg-[repeating-linear-gradient(to_bottom,#8a8a8a_0_5px,transparent_5px_10px)]" />
          <div className="pointer-events-none absolute inset-x-0 bottom-px h-px bg-[repeating-linear-gradient(to_right,#8a8a8a_0_5px,transparent_5px_10px)]" />
        </div>
      </div>
    </div>
  </div>
);

export default App;
